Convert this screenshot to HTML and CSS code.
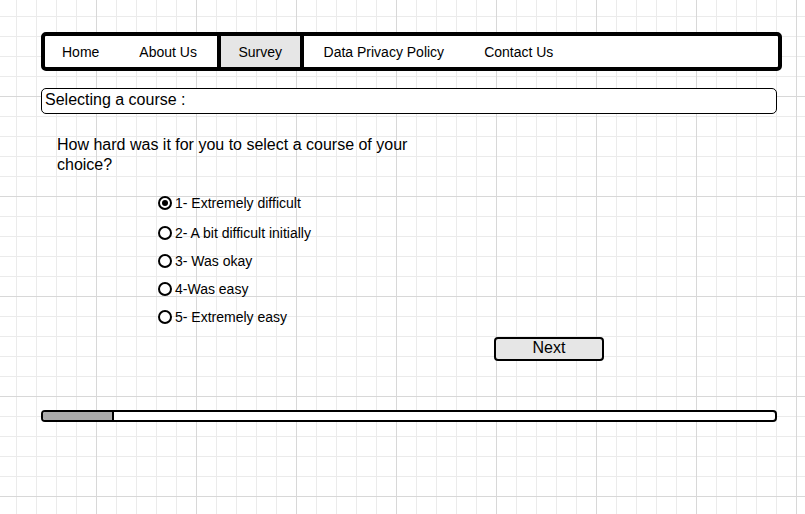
FILE: index.html
```html
<!DOCTYPE html>
<html lang="en">
<head>
<meta charset="utf-8">
<title>Survey</title>
<link rel="stylesheet" href="styles.css">
</head>
<body>
<div class="page">
  <nav class="nav">
    <div class="seg">
      <span class="nav-item first">Home</span>
      <span class="nav-item">About Us</span>
    </div>
    <div class="seg active">
      <span class="nav-item survey">Survey</span>
    </div>
    <div class="seg last">
      <span class="nav-item">Data Privacy Policy</span>
      <span class="nav-item">Contact Us</span>
    </div>
  </nav>

  <div class="section-title">Selecting a course :</div>

  <p class="question">How hard was it for you to select a course of your choice?</p>

  <div class="options">
    <div class="option first-option"><span class="radio checked"></span><span>1- Extremely difficult</span></div>
    <div class="option"><span class="radio"></span><span>2- A bit difficult initially</span></div>
    <div class="option"><span class="radio"></span><span>3- Was okay</span></div>
    <div class="option"><span class="radio"></span><span>4-Was easy</span></div>
    <div class="option"><span class="radio"></span><span>5- Extremely easy</span></div>
  </div>

  <div class="button-row">
    <button class="next">Next</button>
  </div>

  <div class="progress"><div class="progress-fill"></div></div>
</div>
</body>
</html>
```

FILE: styles.css
```css
html {
  min-height: 100%;
  background-color: #fff;
  background-image:
    linear-gradient(to right, #d8d8d8 1px, transparent 1px),
    linear-gradient(to bottom, #d8d8d8 1px, transparent 1px),
    linear-gradient(to right, #ebebeb 1px, transparent 1px),
    linear-gradient(to bottom, #ebebeb 1px, transparent 1px);
  background-size: 100px 100px, 100px 100px, 20px 20px, 20px 20px;
  background-position: -4px -4px, -4px -4px, -4px -4px, -4px -4px;
}

body {
  margin: 0;
  font-family: "Liberation Sans", Arial, sans-serif;
  color: #000;
}

.page {
  padding: 32px 0 0 41px;
}

.nav {
  display: flex;
  width: 741px;
  height: 39px;
  box-sizing: border-box;
  border: 4px solid #000;
  border-radius: 5px;
  background: #fff;
}

.seg {
  display: flex;
  border-right: 4px solid #000;
}

.seg.active {
  background: #e6e6e6;
}

.seg.last {
  border-right: none;
  flex: 1;
}

.nav-item {
  font-size: 14px;
  line-height: 31px;
  padding: 1px 20px 0;
  white-space: nowrap;
}

.nav-item.first {
  padding-left: 17px;
}

.nav-item.survey {
  padding: 1px 17.5px 0;
}

.section-title {
  margin-top: 17px;
  width: 736px;
  height: 26px;
  box-sizing: border-box;
  border: 1px solid #000;
  border-radius: 5px;
  background: #fff;
  padding: 2px 3px 0;
  font-size: 16px;
  line-height: 18px;
}

.question {
  margin: 21px 0 0 16px;
  width: 360px;
  font-size: 16px;
  line-height: 20px;
}

.options {
  margin: 14px 0 0 117px;
}

.option {
  display: flex;
  align-items: center;
  gap: 3px;
  height: 28px;
  font-size: 14px;
}

.option.first-option {
  margin-bottom: 1.5px;
}

.radio {
  position: relative;
  width: 14px;
  height: 14px;
  box-sizing: border-box;
  border: 2px solid #000;
  border-radius: 50%;
  background: #fff;
  flex: none;
}

.radio.checked::after {
  content: "";
  position: absolute;
  left: 2px;
  top: 2px;
  width: 6px;
  height: 6px;
  border-radius: 50%;
  background: #000;
}

.button-row {
  margin: 6px 0 0 453px;
}

.next {
  width: 110px;
  height: 24px;
  box-sizing: border-box;
  border: 2px solid #000;
  border-radius: 4px;
  background: #e6e6e6;
  font-family: "Liberation Sans", Arial, sans-serif;
  font-size: 16px;
  line-height: 18px;
  padding: 0 0 2px;
  color: #000;
}

.progress {
  margin-top: 49px;
  width: 736px;
  height: 12px;
  box-sizing: border-box;
  border: 2px solid #000;
  border-radius: 4px;
  background: #fff;
  overflow: hidden;
}

.progress-fill {
  width: 71px;
  height: 100%;
  box-sizing: border-box;
  background: #aaa;
  border-right: 2px solid #000;
}
```
